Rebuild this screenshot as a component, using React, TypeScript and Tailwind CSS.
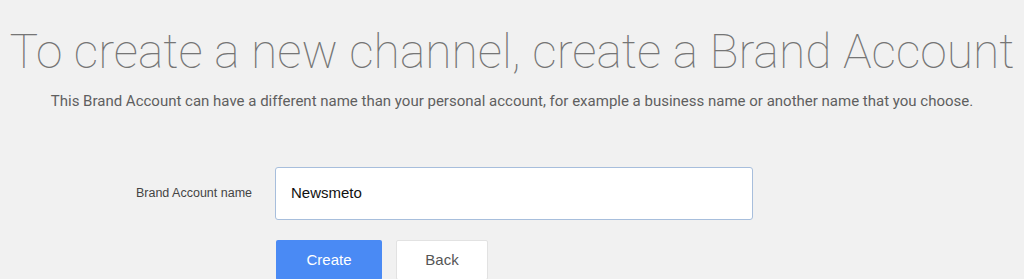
export default function App() {
  return (
    <div className="w-[1024px] h-[279px] overflow-hidden bg-[#f1f1f1]">
      <h1 className="pt-[24px] text-center text-[48px] leading-[56px] font-thin text-[#757575] font-['Roboto',sans-serif] tracking-[0px]">
        To create a new channel, create a Brand Account
      </h1>
      <p className="mt-[11px] text-center text-[15px] leading-[20px] text-[#5f5f5f] font-['Roboto',sans-serif]">
        This Brand Account can have a different name than your personal account, for example a business name or another name that you choose.
      </p>
      <div className="mt-[56px] flex items-center">
        <div className="w-[252px] text-right text-[12.5px] text-[#444] font-['Liberation_Sans',Arial,sans-serif]">
          Brand Account name
        </div>
        <div className="ml-[23px] w-[478px] h-[53px] bg-white border border-[#a7bedc] rounded-[3px] flex items-center pl-[15px] text-[15px] text-[#111] font-['Liberation_Sans',Arial,sans-serif]">
          Newsmeto
        </div>
      </div>
      <div className="mt-[20px] flex gap-[14px] pl-[276px] font-['Liberation_Sans',Arial,sans-serif] text-[15px]">
        <div className="w-[106px] h-[40px] bg-[#4a8af4] text-white flex items-center justify-center rounded-[2px]">
          Create
        </div>
        <div className="w-[92px] h-[40px] bg-white border border-[#e2e2e2] text-[#555] flex items-center justify-center rounded-[2px]">
          Back
        </div>
      </div>
    </div>
  );
}
